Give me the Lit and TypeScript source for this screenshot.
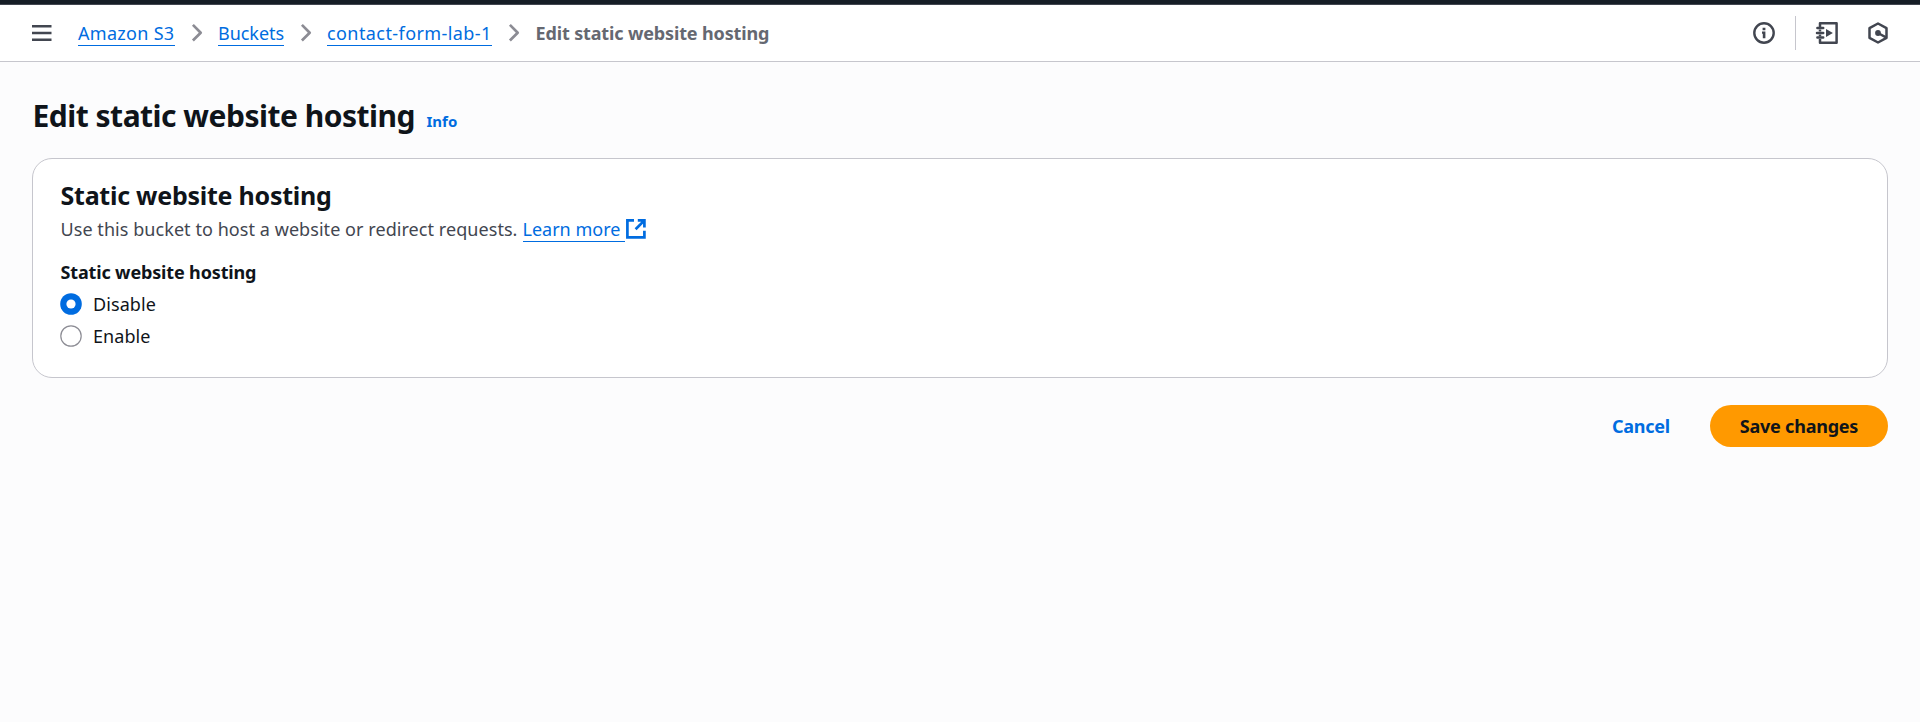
import { LitElement, html, css } from "lit";
import { customElement, state } from "lit/decorators.js";

const chevron = html`<svg class="chev" width="12" height="20" viewBox="0 0 12 20"><path d="M1.9 1.9 9.7 9.7 1.9 17.5" fill="none" stroke="#8c8c94" stroke-width="2.7" stroke-linejoin="round" /></svg>`;

@customElement("app-root")
export class AppRoot extends LitElement {
  @state() private hosting = "Disable";

  static styles = css`
    :host {
      display: block;
      min-height: 722px;
      box-sizing: border-box;
      background: #fcfcfd;
      color: #0f141a;
      font: 18px/25px "Noto Sans", "Open Sans", sans-serif;
      white-space: nowrap;
    }
    svg { display: block; flex: none; }
    a { color: #006ce0; text-decoration: none; }
    h1, h2, p { margin: 0; }
    .strip { height: 4px; background: #161d26; border-bottom: 1px solid #424650; }
    .bar {
      display: flex;
      align-items: center;
      height: 56px;
      padding: 0 32px;
      background: #fff;
      border-bottom: 1px solid #c6c6cd;
    }
    .menu { margin-right: 26px; }
    .crumb { height: 24px; border-bottom: 1px solid #006ce0; }
    .c1 { width: 97px; letter-spacing: 0.3px; }
    .c2 { width: 66px; letter-spacing: -0.05px; }
    .c3 { width: 165px; letter-spacing: 0.42px; }
    .chev { margin: 0 15px 0 16px; }
    .current { padding-left: 0.5px; font-weight: 700; color: #656871; letter-spacing: -0.14px; }
    .tools { display: flex; align-items: center; margin-left: auto; margin-right: -1px; }
    .divider { width: 1px; height: 34px; margin: 0 19px 0 20px; background: #c6c6cd; }
    .hex { margin-left: 29px; }
    main { padding: 36px 32px 0; }
    .title { display: flex; align-items: baseline; height: 60px; }
    h1 { font-size: 30px; line-height: 36px; font-weight: 700; letter-spacing: -0.5px; width: 394px; padding-left: 0.5px; }
    .info { font-size: 15px; line-height: 20px; font-weight: 700; }
    .card {
      padding: 21px 27px 28px;
      background: #fff;
      border: 1px solid #c6c6cd;
      border-radius: 20px;
    }
    h2 { font-size: 25px; line-height: 30px; font-weight: 700; letter-spacing: -0.25px; padding-left: 0.5px; }
    .desc { display: flex; margin-top: 7px; color: #424650; }
    .text { width: 462px; padding-left: 0.5px; letter-spacing: 0.06px; }
    .learn { display: flex; }
    .learn span { width: 102px; height: 24px; border-bottom: 1px solid #006ce0; }
    .learn svg { margin-top: 2px; margin-left: 1px; }
    .label { margin-top: 18px; padding-left: 0.5px; font-weight: 700; letter-spacing: -0.15px; }
    .radio { display: flex; align-items: center; gap: 11px; margin-top: 7px; letter-spacing: 0.08px; cursor: pointer; }
    .radio svg { margin-top: -1px; }
    .actions { display: flex; justify-content: flex-end; align-items: center; margin-top: 27px; font-weight: 700; letter-spacing: -0.22px; }
    .cancel { margin-right: 40px; }
    .save {
      box-sizing: border-box;
      width: 178px;
      height: 42px;
      padding: 0;
      border: 0;
      border-radius: 21px;
      background: #ff9900;
      color: #0f141a;
      font: inherit;
      letter-spacing: inherit;
    }
  `;

  private radio(name: string) {
    const on = this.hosting === name;
    return html`<div class="radio" role="radio" aria-checked=${on} @click=${() => (this.hosting = name)}>
      ${on
        ? html`<svg width="22" height="22"><circle cx="11" cy="11" r="10.8" fill="#006ce0" /><circle cx="11" cy="11" r="4.6" fill="#fff" /></svg>`
        : html`<svg width="22" height="22"><circle cx="11" cy="11" r="10.2" fill="#fff" stroke="#8c8c94" stroke-width="1.2" /></svg>`}
      <span>${name}</span>
    </div>`;
  }

  render() {
    return html`
      <div class="strip"></div>
      <header class="bar">
        <svg class="menu" width="20" height="18" viewBox="0 0 20 18">
          <path d="M0 2.3h19.5M0 9h19.5M0 15.7h19.5" stroke="#424650" stroke-width="2.5" />
        </svg>
        <a class="crumb c1">Amazon S3</a>${chevron}
        <a class="crumb c2">Buckets</a>${chevron}
        <a class="crumb c3">contact-form-lab-1</a>${chevron}
        <span class="current">Edit static website hosting</span>
        <div class="tools">
          <svg width="22" height="22" viewBox="0 0 22 22">
            <circle cx="11" cy="11" r="9.7" fill="none" stroke="#424650" stroke-width="2.4" />
            <path d="M9.6 5.7h2.8v2.6H9.6zM9 9.5h3.4v6.7H9.8v-4.5H9z" fill="#424650" />
          </svg>
          <div class="divider"></div>
          <svg width="23" height="22" viewBox="0 0 23 22">
            <path d="M5 5V1.2h16.6v19.6H5V17M5 7.5v2M5 12.5v2" fill="none" stroke="#424650" stroke-width="2.5" stroke-linejoin="round" />
            <path d="M2.4 6h5.8M2 11h6.2M2.4 15.6h5.8" stroke="#424650" stroke-width="2.5" stroke-linecap="round" />
            <path d="M11 7v8l6.9-4z" fill="#424650" />
          </svg>
          <svg class="hex" width="22" height="22" viewBox="0 0 22 22">
            <path d="M11 1.5 19.5 6.2v9.6L11 20.5l-8.5-4.7V6.2z" fill="none" stroke="#424650" stroke-width="2.5" stroke-linejoin="round" />
            <circle cx="11" cy="11" r="2.9" fill="#424650" />
            <path d="m11 11 8 4.4" stroke="#424650" stroke-width="2.4" />
          </svg>
        </div>
      </header>
      <main>
        <div class="title"><h1>Edit static website hosting</h1><a class="info">Info</a></div>
        <section class="card">
          <h2>Static website hosting</h2>
          <div class="desc">
            <p class="text">Use this bucket to host a website or redirect requests.</p>
            <a class="learn"><span>Learn more</span>
              <svg width="20" height="20" viewBox="0 0 20 20">
                <path d="M8 1.4H1.4v17h17v-6.6M11.8 1.4h6.6v7M18.2 1.6 9.6 10.2" fill="none" stroke="#006ce0" stroke-width="2.7" />
              </svg>
            </a>
          </div>
          <div class="label">Static website hosting</div>
          ${this.radio("Disable")}${this.radio("Enable")}
        </section>
        <div class="actions"><a class="cancel">Cancel</a><button class="save">Save changes</button></div>
      </main>
    `;
  }
}
